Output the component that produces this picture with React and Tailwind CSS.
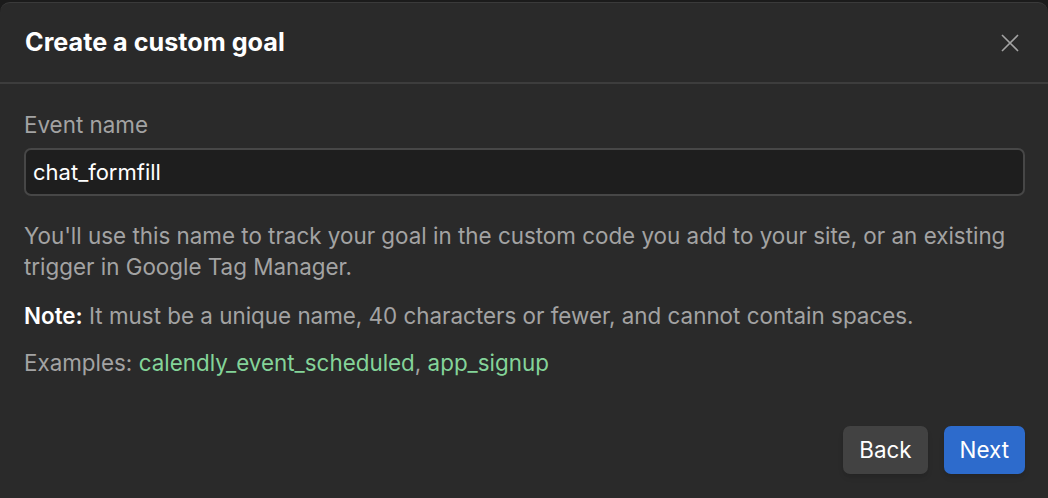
import React, { useState } from "react";

const App = () => {
  const [name, setName] = useState("chat_formfill");
  return (
    <div
      className="w-full h-screen bg-[#1b1b1b] pt-[2px] overflow-hidden"
      style={{ fontFamily: "Inter, 'Noto Sans', sans-serif" }}
    >
      <div className="h-[520px] bg-[#2a2a2a] rounded-t-[10px] border-t border-[#3a3a3a]">
        <div className="h-[81px] flex items-center justify-between pl-[25px] pr-[29px] border-b-2 border-[#3d3d3d]">
          <h1 className="text-[25.2px] font-bold text-white">
            Create a custom goal
          </h1>
          <button className="text-[#a3a3a3]">
            <svg width="18" height="18" viewBox="0 0 18 18" fill="none">
              <path
                d="M1 1L17 17M17 1L1 17"
                stroke="currentColor"
                strokeWidth="1.6"
              />
            </svg>
          </button>
        </div>
        <div className="pl-[24px] pr-[23px] pt-[25px]">
          <label className="block text-[22.4px] text-[#a3a3a3] leading-[31px]">
            Event name
          </label>
          <input
            value={name}
            onChange={(e) => setName(e.target.value)}
            className="mt-[8px] w-full h-[48px] rounded-[7px] border-2 border-[#474747] bg-[#1e1e1e] px-[7px] text-[22px] text-white outline-none"
          />
          <p className="mt-[24px] text-[22.4px] leading-[31px] text-[#a3a3a3]">
            You'll use this name to track your goal in the custom code you add to
            your site, or an existing trigger in Google Tag Manager.
          </p>
          <p className="mt-[18px] text-[22.4px] leading-[31px] text-[#a3a3a3]">
            <span className="font-semibold text-white">Note:</span> It must be a
            unique name, 40 characters or fewer, and cannot contain spaces.
          </p>
          <p className="mt-[16px] text-[22.4px] leading-[31px] text-[#a3a3a3]">
            Examples:{" "}
            <span className="text-[#84d499]">calendly_event_scheduled</span>,{" "}
            <span className="text-[#84d499]">app_signup</span>
          </p>
          <div className="mt-[48px] flex justify-end gap-[16px]">
            <button className="h-[48px] px-[16px] rounded-[7px] bg-[#424242] text-[22.4px] text-white shadow-md">
              Back
            </button>
            <button className="h-[48px] px-[16px] rounded-[7px] bg-[#2d6bcc] text-[22.4px] text-white shadow-md">
              Next
            </button>
          </div>
        </div>
      </div>
    </div>
  );
};

export default App;
